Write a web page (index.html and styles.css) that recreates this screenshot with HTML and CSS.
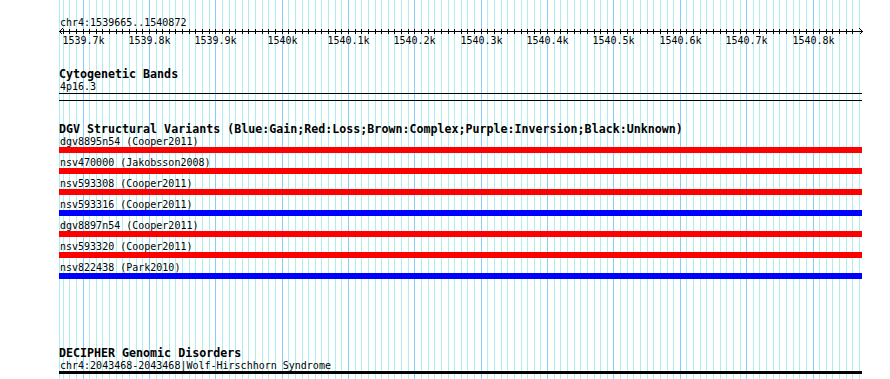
FILE: index.html
```html
<!DOCTYPE html>
<html lang="en">
<head>
<meta charset="utf-8">
<title>chr4:1539665..1540872</title>
<link rel="stylesheet" href="styles.css">
</head>
<body>
<div class="browser">
  <div class="panel">
    <svg class="grid" width="804" height="379" viewBox="0 0 804 379" aria-hidden="true">
      <path class="grid-minor" d="M0.5 0V379M4.5 0V379M10.5 0V379M17.5 0V379M30.5 0V379M37.5 0V379M43.5 0V379M50.5 0V379M57.5 0V379M63.5 0V379M70.5 0V379M77.5 0V379M83.5 0V379M97.5 0V379M103.5 0V379M110.5 0V379M116.5 0V379M123.5 0V379M130.5 0V379M136.5 0V379M143.5 0V379M150.5 0V379M163.5 0V379M170.5 0V379M176.5 0V379M183.5 0V379M189.5 0V379M196.5 0V379M203.5 0V379M209.5 0V379M216.5 0V379M229.5 0V379M236.5 0V379M243.5 0V379M249.5 0V379M256.5 0V379M262.5 0V379M269.5 0V379M276.5 0V379M282.5 0V379M296.5 0V379M302.5 0V379M309.5 0V379M316.5 0V379M322.5 0V379M329.5 0V379M335.5 0V379M342.5 0V379M349.5 0V379M362.5 0V379M369.5 0V379M375.5 0V379M382.5 0V379M389.5 0V379M395.5 0V379M402.5 0V379M408.5 0V379M415.5 0V379M428.5 0V379M435.5 0V379M442.5 0V379M448.5 0V379M455.5 0V379M462.5 0V379M468.5 0V379M475.5 0V379M481.5 0V379M495.5 0V379M501.5 0V379M508.5 0V379M515.5 0V379M521.5 0V379M528.5 0V379M535.5 0V379M541.5 0V379M548.5 0V379M561.5 0V379M568.5 0V379M574.5 0V379M581.5 0V379M588.5 0V379M594.5 0V379M601.5 0V379M608.5 0V379M614.5 0V379M627.5 0V379M634.5 0V379M641.5 0V379M647.5 0V379M654.5 0V379M661.5 0V379M667.5 0V379M674.5 0V379M681.5 0V379M694.5 0V379M700.5 0V379M707.5 0V379M714.5 0V379M720.5 0V379M727.5 0V379M734.5 0V379M740.5 0V379M747.5 0V379M760.5 0V379M767.5 0V379M773.5 0V379M780.5 0V379M787.5 0V379M793.5 0V379M800.5 0V379"/>
      <path class="grid-major" d="M24.5 0V379M90.5 0V379M156.5 0V379M223.5 0V379M289.5 0V379M355.5 0V379M422.5 0V379M488.5 0V379M554.5 0V379M621.5 0V379M687.5 0V379M754.5 0V379"/>
    </svg>

    <div class="locus">chr4:1539665..1540872</div>

    <svg class="ruler" width="804" height="20" viewBox="0 0 804 20" role="img" aria-label="Scale 1539.7k to 1540.8k">
      <path class="axis" d="M0.5 4.5H803.5M3.5 1.5L0.5 4.5L3.5 7.5M800.5 1.5L803.5 4.5L800.5 7.5"/>
      <path class="ticks" d="M4.5 2v5M10.5 2v5M17.5 2v5M24.5 2v5M30.5 2v5M37.5 2v5M43.5 2v5M50.5 2v5M57.5 2v5M63.5 2v5M70.5 2v5M77.5 2v5M83.5 2v5M90.5 2v5M97.5 2v5M103.5 2v5M110.5 2v5M116.5 2v5M123.5 2v5M130.5 2v5M136.5 2v5M143.5 2v5M150.5 2v5M156.5 2v5M163.5 2v5M170.5 2v5M176.5 2v5M183.5 2v5M189.5 2v5M196.5 2v5M203.5 2v5M209.5 2v5M216.5 2v5M223.5 2v5M229.5 2v5M236.5 2v5M243.5 2v5M249.5 2v5M256.5 2v5M262.5 2v5M269.5 2v5M276.5 2v5M282.5 2v5M289.5 2v5M296.5 2v5M302.5 2v5M309.5 2v5M316.5 2v5M322.5 2v5M329.5 2v5M335.5 2v5M342.5 2v5M349.5 2v5M355.5 2v5M362.5 2v5M369.5 2v5M375.5 2v5M382.5 2v5M389.5 2v5M395.5 2v5M402.5 2v5M408.5 2v5M415.5 2v5M422.5 2v5M428.5 2v5M435.5 2v5M442.5 2v5M448.5 2v5M455.5 2v5M462.5 2v5M468.5 2v5M475.5 2v5M481.5 2v5M488.5 2v5M495.5 2v5M501.5 2v5M508.5 2v5M515.5 2v5M521.5 2v5M528.5 2v5M535.5 2v5M541.5 2v5M548.5 2v5M554.5 2v5M561.5 2v5M568.5 2v5M574.5 2v5M581.5 2v5M588.5 2v5M594.5 2v5M601.5 2v5M608.5 2v5M614.5 2v5M621.5 2v5M627.5 2v5M634.5 2v5M641.5 2v5M647.5 2v5M654.5 2v5M661.5 2v5M667.5 2v5M674.5 2v5M681.5 2v5M687.5 2v5M694.5 2v5M700.5 2v5M707.5 2v5M714.5 2v5M720.5 2v5M727.5 2v5M734.5 2v5M740.5 2v5M747.5 2v5M754.5 2v5M760.5 2v5M767.5 2v5M773.5 2v5M780.5 2v5M787.5 2v5M793.5 2v5"/>
      <g class="ruler-labels">
        <text x="24.5" y="17">1539.7k</text>
        <text x="90.5" y="17">1539.8k</text>
        <text x="156.5" y="17">1539.9k</text>
        <text x="223.5" y="17">1540k</text>
        <text x="289.5" y="17">1540.1k</text>
        <text x="355.5" y="17">1540.2k</text>
        <text x="422.5" y="17">1540.3k</text>
        <text x="488.5" y="17">1540.4k</text>
        <text x="554.5" y="17">1540.5k</text>
        <text x="621.5" y="17">1540.6k</text>
        <text x="687.5" y="17">1540.7k</text>
        <text x="754.5" y="17">1540.8k</text>
      </g>
    </svg>

    <section class="track track-cyto">
      <h2 class="track-title">Cytogenetic Bands</h2>
      <div class="cyto-label">4p16.3</div>
      <div class="cytoband"></div>
    </section>

    <section class="track track-dgv">
      <h2 class="track-title">DGV Structural Variants (Blue:Gain;Red:Loss;Brown:Complex;Purple:Inversion;Black:Unknown)</h2>
      <div class="variant">
        <div class="feature-label">dgv8895n54 (Cooper2011)</div>
        <div class="bar bar-loss"></div>
      </div>
      <div class="variant">
        <div class="feature-label">nsv470000 (Jakobsson2008)</div>
        <div class="bar bar-loss"></div>
      </div>
      <div class="variant">
        <div class="feature-label">nsv593308 (Cooper2011)</div>
        <div class="bar bar-loss"></div>
      </div>
      <div class="variant">
        <div class="feature-label">nsv593316 (Cooper2011)</div>
        <div class="bar bar-gain"></div>
      </div>
      <div class="variant">
        <div class="feature-label">dgv8897n54 (Cooper2011)</div>
        <div class="bar bar-loss"></div>
      </div>
      <div class="variant">
        <div class="feature-label">nsv593320 (Cooper2011)</div>
        <div class="bar bar-loss"></div>
      </div>
      <div class="variant">
        <div class="feature-label">nsv822438 (Park2010)</div>
        <div class="bar bar-gain"></div>
      </div>
    </section>

    <section class="track track-decipher">
      <h2 class="track-title">DECIPHER Genomic Disorders</h2>
      <div class="feature-label">chr4:2043468-2043468|Wolf-Hirschhorn Syndrome</div>
      <div class="bar bar-disorder"></div>
    </section>
  </div>
</div>
</body>
</html>
```

FILE: styles.css
```css
* {
  box-sizing: border-box;
}

html,
body {
  margin: 0;
  padding: 0;
  background: #ffffff;
}

body {
  width: 890px;
  height: 379px;
  overflow: hidden;
  font-family: "DejaVu Sans Mono", "Liberation Mono", monospace;
  color: #000000;
}

.browser {
  height: 379px;
  padding-left: 59px;
}

.panel {
  position: relative;
  width: 804px;
  height: 379px;
}

.grid {
  position: absolute;
  left: 0;
  top: 0;
  z-index: 0;
}

.grid-minor,
.grid-major {
  fill: none;
  stroke-width: 1;
  shape-rendering: crispEdges;
}

.grid-minor {
  stroke: #afeeee;
}

.grid-major {
  stroke: #87cefa;
}

.locus,
.ruler,
.track {
  position: relative;
  z-index: 1;
}

.locus {
  height: 27px;
  padding: 16px 0 0 1px;
  font-size: 10px;
  line-height: 13px;
  white-space: nowrap;
}

.ruler {
  display: block;
  overflow: visible;
}

.axis,
.ticks {
  fill: none;
  stroke: #000000;
  stroke-width: 1;
  shape-rendering: crispEdges;
}

.ruler-labels text {
  font-family: "DejaVu Sans Mono", "Liberation Mono", monospace;
  font-size: 10px;
  text-anchor: middle;
  fill: #000000;
}

.track-title {
  margin: 0;
  padding: 1px 0 1px 0;
  font-size: 11.65px;
  font-weight: bold;
  line-height: 12px;
  white-space: nowrap;
}

.track-cyto {
  margin-top: 20px;
}

.cyto-label {
  font-size: 10px;
  line-height: 12px;
  padding-left: 1px;
}

.cytoband {
  width: 803px;
  height: 8px;
  border-top: 1px solid #000000;
  border-bottom: 1px solid #000000;
}

.track-dgv {
  margin-top: 21px;
}

.variant {
  height: 21px;
}

.feature-label {
  font-size: 10px;
  line-height: 11px;
  padding-left: 1px;
  white-space: nowrap;
}

.bar {
  width: 803px;
}

.bar-loss {
  height: 6px;
  background: #ff0000;
}

.bar-gain {
  height: 6px;
  background: #0000ff;
}

.track-decipher {
  margin-top: 63px;
}

.bar-disorder {
  height: 3px;
  background: #000000;
}
```
